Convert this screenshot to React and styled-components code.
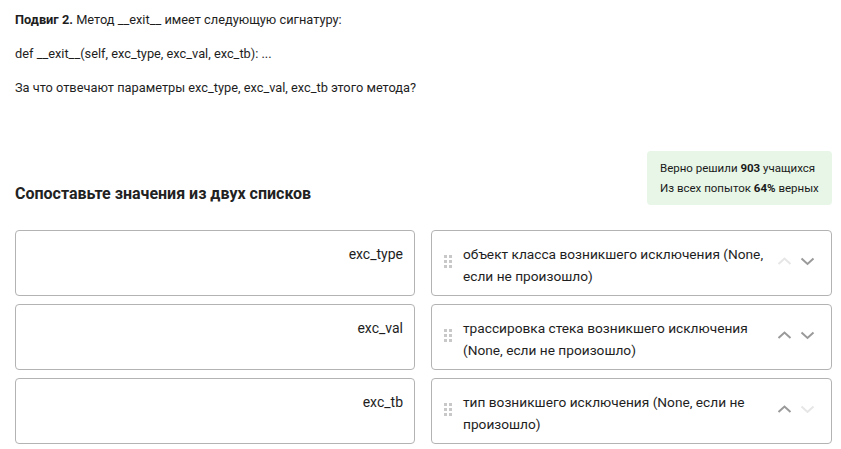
import React from "react";
import styled, { createGlobalStyle } from "styled-components";

const Global = createGlobalStyle`
  html, body { margin: 0; padding: 0; background: #fff; }
  body { font-family: Roboto, "Noto Sans", sans-serif; color: #222; }
  * { box-sizing: border-box; }
`;

const Page = styled.div`
  padding: 10px 9px 0 15px;
`;

const Para = styled.p`
  margin: 0 0 14px;
  font-size: 12.8px;
  line-height: 20px;
  color: #1e1e1e;
  b { font-weight: 700; }
`;

const HeaderRow = styled.div`
  display: flex;
  justify-content: space-between;
  align-items: flex-end;
  margin-top: 53px;
`;

const Heading = styled.h2`
  margin: 0 0 1px;
  font-size: 16px;
  line-height: 20px;
  font-weight: 700;
  color: #222;
`;

const Stats = styled.div`
  background: #e7f6e7;
  border-radius: 4px;
  padding: 7px 10px 7px 13px;
  width: 185px;
  font-size: 11.5px;
  line-height: 20px;
  color: #1a1a1a;
  white-space: nowrap;
  b { font-weight: 700; }
`;

const Grid = styled.div`
  display: grid;
  grid-template-columns: 400px 401px;
  column-gap: 16px;
  row-gap: 8px;
  margin-top: 25px;
`;

const Card = styled.div`
  height: 66px;
  border: 1px solid #b3b3b3;
  border-radius: 4px;
  background: #fff;
`;

const LeftCard = styled(Card)`
  display: flex;
  justify-content: flex-end;
  align-items: flex-start;
  padding: 12px 11px 0 0;
  font-size: 14px;
  line-height: 22px;
  color: #1e1e1e;
`;

const RightCard = styled(Card)`
  display: flex;
  align-items: center;
  padding: 4px 16px 0 12px;
`;

const Handle = styled.div`
  display: grid;
  grid-template-columns: repeat(2, 3px);
  grid-auto-rows: 3px;
  gap: 2px;
  width: 8px;
  margin-right: 11px;
  margin-top: -8px;
  span { background: #c8c8c8; }
`;

const Label = styled.div`
  flex: 1;
  font-size: 13.7px;
  line-height: 22px;
  color: #1e1e1e;
  padding-right: 4px;
`;

const Arrows = styled.div`
  display: flex;
  align-items: center;
  gap: 8px;
  margin-top: -8px;
`;

const Chevron = ({ up, active }) => (
  <svg width="15" height="10" viewBox="0 0 15 10">
    <path
      d={up ? "M1.5 8 L7.5 2.5 L13.5 8" : "M1.5 2.5 L7.5 8 L13.5 2.5"}
      fill="none"
      stroke={active ? "#9a9a9a" : "#e6e6e6"}
      strokeWidth="2"
    />
  </svg>
);

const rows = [
  { left: "exc_type", right: "объект класса возникшего исключения (None, если не произошло)", up: false, down: true },
  { left: "exc_val", right: "трассировка стека возникшего исключения (None, если не произошло)", up: true, down: true },
  { left: "exc_tb", right: "тип возникшего исключения (None, если не произошло)", up: true, down: false },
];

export default function App() {
  return (
    <Page>
      <Global />
      <Para><b>Подвиг 2.</b> Метод __exit__ имеет следующую сигнатуру:</Para>
      <Para>def __exit__(self, exc_type, exc_val, exc_tb): ...</Para>
      <Para>За что отвечают параметры exc_type, exc_val, exc_tb этого метода?</Para>
      <HeaderRow>
        <Heading>Сопоставьте значения из двух списков</Heading>
        <Stats>
          <div>Верно решили <b>903</b> учащихся</div>
          <div>Из всех попыток <b>64%</b> верных</div>
        </Stats>
      </HeaderRow>
      <Grid>
        {rows.map((r) => (
          <React.Fragment key={r.left}>
            <LeftCard>{r.left}</LeftCard>
            <RightCard>
              <Handle>
                {Array.from({ length: 6 }).map((_, i) => <span key={i} />)}
              </Handle>
              <Label>{r.right}</Label>
              <Arrows>
                <Chevron up active={r.up} />
                <Chevron active={r.down} />
              </Arrows>
            </RightCard>
          </React.Fragment>
        ))}
      </Grid>
    </Page>
  );
}
